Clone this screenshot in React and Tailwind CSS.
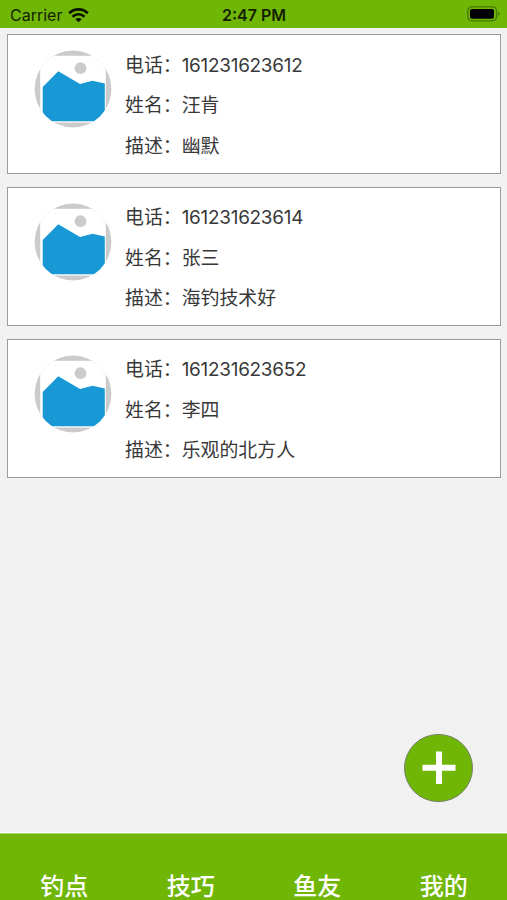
const people = [
  { phone: "161231623612", name: "汪肯", about: "幽默" },
  { phone: "161231623614", name: "张三", about: "海钓技术好" },
  { phone: "161231623652", name: "李四", about: "乐观的北方人" },
];

const tabs = ["钓点", "技巧", "鱼友", "我的"];

function WifiIcon() {
  return (
    <svg className="ml-[5.5px] h-[15px] w-[21px]" viewBox="0 0 21 15" fill="none" stroke="#0b1200">
      <path d="M1.2 5.2 C6.2 0.1 14.8 0.1 19.8 5.2" strokeWidth="2.7" />
      <path d="M4.5 8.7 C8 5.4 13 5.4 16.5 8.7" strokeWidth="2.6" />
      <path d="M10.5 14.2 L7.3 11.3 C9.2 9.6 11.8 9.6 13.7 11.3 Z" fill="#0b1200" stroke="none" />
    </svg>
  );
}

function BatteryIcon() {
  return (
    <svg className="h-4 w-[34px]" viewBox="0 0 34 16">
      <rect x="0.8" y="0.8" width="28.7" height="14" rx="4" fill="none" stroke="#467800" strokeWidth="1.3" />
      <rect x="3" y="3" width="24" height="9.8" rx="2" fill="#000" />
      <path d="M31 5.6 C33 6.4 33 9.3 31 10.1 Z" fill="#467800" />
    </svg>
  );
}

function Avatar() {
  return (
    <svg className="mt-[15px] h-[78px] w-[78px] shrink-0 rounded-full" viewBox="0 0 78 78">
      <defs>
        <clipPath id="avatar-circle">
          <circle cx="39" cy="39" r="38.4" />
        </clipPath>
      </defs>
      <g clipPath="url(#avatar-circle)">
        <rect width="78" height="78" fill="#cbcbcb" />
        <rect x="6.2" y="5.8" width="65.6" height="66.7" fill="#fff" />
        <circle cx="46.5" cy="18.2" r="5.9" fill="#cbcbcb" />
        <path d="M8.7 37 L24.3 21.3 L46 34 L58.5 30.8 L70.8 33.6 V62.6 L62 71.2 H17 L8.7 63.2 Z" fill="#1899d5" />
      </g>
    </svg>
  );
}

function PersonCard({ person }) {
  return (
    <article className="flex h-[139.3px] border border-[#9b9b9b] bg-white pl-[26px]">
      <Avatar />
      <div className="ml-[13px] flex flex-col pt-[10.5px] text-[18.9px] leading-[40.5px] text-[#383838]">
        <p>电话：<span className="tracking-[-0.25px]">{person.phone}</span></p>
        <p>姓名：{person.name}</p>
        <p>描述：{person.about}</p>
      </div>
    </article>
  );
}

export default function App() {
  return (
    <div className="relative flex h-[900px] w-[507px] flex-col overflow-hidden bg-[#f1f1f1] font-['Inter','Noto_Sans_CJK_SC',sans-serif]">
      <header className="grid h-7 shrink-0 grid-cols-3 items-center bg-[#70b607] text-[#152200]">
        <div className="flex items-center pl-[10px] pt-[2px] text-[16px]">
          Carrier
          <WifiIcon />
        </div>
        <div className="pl-[1px] pt-[2px] text-center text-[16px] font-semibold">2:47 PM</div>
        <div className="flex justify-end pr-[6px]">
          <BatteryIcon />
        </div>
      </header>
      <main className="flex grow flex-col gap-[13px] pl-[7px] pr-[6.5px] pt-[6.4px]">
        {people.map((person) => (
          <PersonCard key={person.phone} person={person} />
        ))}
      </main>
      <button aria-label="添加" className="absolute left-[404px] top-[733.5px] flex h-[68px] w-[69px] items-center justify-center rounded-full border border-[#73806a] bg-[#70b607]">
        <svg className="size-[34px]" viewBox="0 0 34 34" stroke="#fff" strokeWidth="6">
          <path d="M17 0.5 V33 M0.5 16.8 H33.5" />
        </svg>
      </button>
      <div className="h-px shrink-0 bg-white" />
      <nav className="grid h-[67px] shrink-0 grid-cols-4 border-t border-[#a9d36b] bg-[#70b607] pl-[1px] pt-[36px] text-center text-[24px] font-medium leading-[34px] text-white">
        {tabs.map((tab) => (
          <a key={tab}>{tab}</a>
        ))}
      </nav>
    </div>
  );
}
